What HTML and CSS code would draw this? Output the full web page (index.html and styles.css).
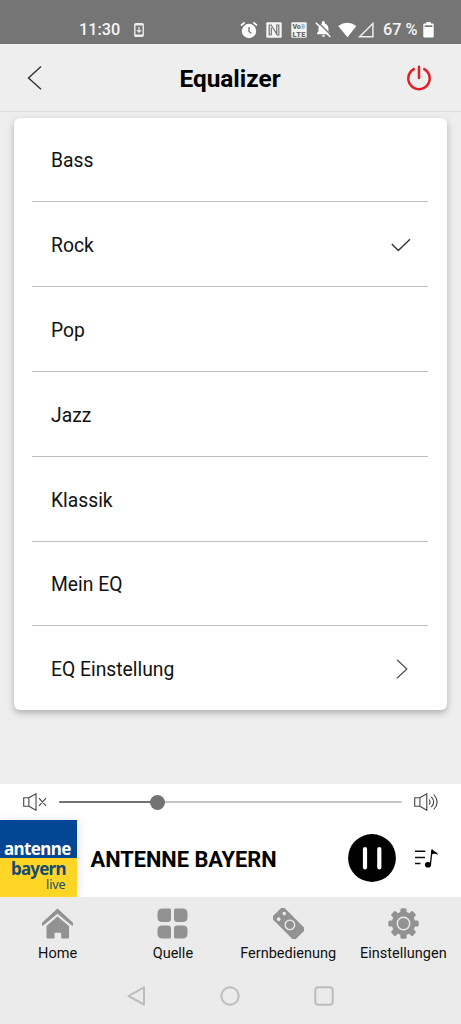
FILE: index.html
```html
<!DOCTYPE html>
<html lang="de">
<head>
<meta charset="utf-8">
<meta name="viewport" content="width=device-width, initial-scale=1">
<title>Equalizer</title>
<link rel="stylesheet" href="styles.css">
</head>
<body>
<div class="app">
  <div class="status">
    <span class="time">11:30</span>
    <svg class="update" width="10" height="14" viewBox="0 0 10 14"><rect x=".8" y=".8" width="8.4" height="12.4" rx="1" fill="none" stroke="#eee" stroke-width="1.4"/><path d="M1 1.7h8M1 12.3h8" stroke="#eee" stroke-width="1.6"/><path d="M5 4v5M3 7.200l2 2 2-2" fill="none" stroke="#eee" stroke-width="1.2"/></svg>
    <div class="indicators">
      <svg width="18" height="18" viewBox="0 0 18 18"><circle cx="9" cy="10" r="7.200" fill="#fff"/><path d="M1 4.500 4.700 1.300M17 4.500 13.300 1.300" stroke="#fff" stroke-width="1.700"/><path d="M9 6v4.500l2.300 1.800" fill="none" stroke="#757575" stroke-width="1.400"/></svg>
      <svg width="16" height="16" viewBox="0 0 16 16"><rect x=".3" y=".3" width="15.400" height="15.400" rx="1" fill="#f4f4f4"/><path d="M5.300 13H3.200V3h2L10.700 12V3h2.100v10h-2" fill="none" stroke="#757575" stroke-width="1.200"/><path d="M5.300 13V5.500" stroke="#757575" stroke-width="1.200"/></svg>
      <svg width="16" height="16" viewBox="0 0 16 16"><rect x=".3" y=".3" width="15.400" height="15.400" rx="1" fill="#f4f4f4"/><g fill="#686868" font-family="Roboto, sans-serif" font-weight="900"><text x="1.400" y="7.300" font-size="7">Vo</text><text x="10.300" y="5.800" font-size="4.500">))</text><text x="1.500" y="14.500" font-size="7.500" textLength="13">LTE</text></g></svg>
      <svg width="17" height="17" viewBox="0 0 17 17"><path d="M2 13.300v-1.200l1.500-1.500V7.500C3.500 4.700 5 3.100 7 2.600V1.400a1.400 1.400 0 0 1 2.800 0v1.200c2.200.5 3.600 2.400 3.600 4.900v3.100l1.600 1.500v1.200zM6.800 14.200h3.300a1.650 1.650 0 0 1-3.300 0z" fill="#fff"/><path d="M2.300.6 16.800 14.700" stroke="#757575" stroke-width="1.400"/><path d="M.8 1.700 15.300 15.900" stroke="#fff" stroke-width="1.400"/></svg>
      <svg width="19" height="16" viewBox="0 0 19 16"><path d="M.2 4.100Q9.500-2.700 18.300 4.100L9.500 15.300z" fill="#fff"/></svg>
      <svg width="16" height="16" viewBox="0 0 16 16"><path d="M1.600 14.800 14.900 1.500v13.300z" fill="none" stroke="#eee" stroke-width="1.500"/></svg>
      <span class="percent">67 %</span>
      <svg width="11" height="16" viewBox="0 0 11 16"><path d="M3.300 0h4.400v1.500h2q1 0 1 1v12q0 1-1 1H1.300q-1 0-1-1v-12q0-1 1-1h2z" fill="#fff"/><path d="M1.700 3.300h7.600V5H1.700z" fill="#757575"/></svg>
    </div>
  </div>

  <header class="header">
    <svg width="16" height="26" viewBox="0 0 16 26"><path d="M14 1.500 1.500 12.900 14 24.300" fill="none" stroke="#333" stroke-width="1.400"/></svg>
    <h1>Equalizer</h1>
    <svg width="26" height="26" viewBox="0 0 26 26"><path d="M7.800 4.100a10.700 10.700 0 1 0 10.400 0M13 1.700v11.200" fill="none" stroke="#e21e25" stroke-width="2.500" stroke-linecap="round"/></svg>
  </header>

  <main class="content">
    <ul class="card">
      <li>Bass</li>
      <li>Rock<svg class="check" width="20" height="14" viewBox="0 0 20 14"><path d="M.8 6 7.300 12.500 19 1.200" fill="none" stroke="#333" stroke-width="1.400"/></svg></li>
      <li>Pop</li>
      <li>Jazz</li>
      <li>Klassik</li>
      <li>Mein EQ</li>
      <li>EQ Einstellung<svg class="more" width="12" height="20" viewBox="0 0 12 20"><path d="M1 .8 10.800 10 1 19.200" fill="none" stroke="#555" stroke-width="1.300"/></svg></li>
    </ul>
  </main>

  <section class="volume">
    <svg width="24" height="18" viewBox="0 0 24 18"><path d="M.7 4.800h5.200v8.500H.7zM5.900 4.800 13 .8v16.500l-7.100-4M16 5.200l7 7.600M23 5.200l-7 7.600" fill="none" stroke="#444" stroke-width="1.100"/></svg>
    <div class="track"><div class="fill"></div><div class="knob"></div></div>
    <svg width="24" height="18" viewBox="0 0 24 18"><path d="M.7 4.800h5.200v8.500H.7zM5.900 4.800 12.800.8v16.500l-6.900-4M15 6.500q2.200 2.500 0 5M17.300 3.800q4.800 5.200 0 10.400M19.700 1.500q6.900 7.500 0 15" fill="none" stroke="#444" stroke-width="1.100"/></svg>
  </section>

  <section class="player">
    <div class="cover"><span class="antenne">antenne</span><span class="bayern">bayern</span><span class="live">live</span></div>
    <strong class="station">ANTENNE BAYERN</strong>
    <svg class="pause" width="48" height="48" viewBox="0 0 48 48"><circle cx="24" cy="24" r="23.900"/><path d="M17 15v18.500M31.300 15v18.500" stroke="#fff" stroke-width="4.200" stroke-linecap="round"/></svg>
    <svg width="25" height="20" viewBox="0 0 25 20"><path d="M1 2.200h10.300M1 8.500h10M1 14.500h5.500M16.300 16l1.700-14.500" stroke="#111" stroke-width="1.400"/><ellipse cx="14" cy="15.800" rx="3.100" ry="2.800"/><path d="M17.300.5h1.500c.8 2.500 4.500 1.800 5.200 5.500-2-1.700-4.800-1.600-7-.7z"/></svg>
  </section>

  <nav class="tabs">
    <div class="tab"><svg width="31" height="31" viewBox="0 0 31 31"><path d="m.5 14.800 15-13.800 15 13.800v2.700L15.500 5.300.5 17.500z" fill="#929292" stroke="#929292" stroke-linejoin="round"/><path d="M4.500 18 15.500 8.500 27 18v11.500q0 1-1 1h-6.800v-4.800q0-1-1-1h-4.700q-1 0-1 1v4.800H5.500q-1 0-1-1z" fill="#929292"/></svg><span>Home</span></div>
    <div class="tab"><svg width="31" height="31" viewBox="0 0 31 31" fill="#929292"><path d="M5.500.5h7q1.500 0 1.500 1.500v9q0 3-3 3H5.500q-5 0-5-4.500v-4q0-5 5-5zM18.500.5h7q5 0 5 5v4q0 4.500-5 4.500H20q-3 0-3-3V2q0-1.500 1.500-1.500zM5.500 17.500h5.500q3 0 3 3v8.500q0 1.500-1.500 1.500h-7q-5 0-5-5v-4q0-4 5-4zM20 17.500h5.500q5 0 5 4v4q0 5-5 5h-7q-1.500 0-1.500-1.500v-8.500q0-3 3-3z"/></svg><span>Quelle</span></div>
    <div class="tab"><svg width="31" height="31" viewBox="0 0 31 31"><g transform="rotate(-45 15.500 15.500)"><rect x="7.300" y="-.7" width="16.400" height="32.400" rx="3.500" fill="#929292"/><circle cx="15.500" cy="17.500" r="4.700" fill="none" stroke="#ebebeb" stroke-width="1.500"/><circle cx="11.700" cy="5.500" r="1.800" fill="#ebebeb"/><circle cx="19.500" cy="5.500" r="1.800" fill="#ebebeb"/></g></svg><span>Fernbedienung</span></div>
    <div class="tab"><svg width="31" height="31" viewBox="0 0 31 31"><g fill="#929292"><circle cx="15.500" cy="15.500" r="11.700"/><g id="teeth"><rect x="12.400" y=".3" width="6.200" height="30.400" rx="1.500"/><rect x=".3" y="12.400" width="30.400" height="6.200" rx="1.500"/></g><use href="#teeth" transform="rotate(45 15.500 15.500)"/></g><circle cx="15.500" cy="15.500" r="6.200" fill="none" stroke="#ebebeb" stroke-width="1.400"/></svg><span>Einstellungen</span></div>
  </nav>

  <div class="system">
    <svg width="19" height="20" viewBox="0 0 19 20"><path d="M17 1.300v17.200L1.500 10z"/></svg>
    <svg width="20" height="20" viewBox="0 0 20 20"><circle cx="10" cy="10" r="8.700"/></svg>
    <svg width="20" height="20" viewBox="0 0 20 20"><rect x="1.300" y="1.300" width="17.400" height="17.400" rx="3"/></svg>
  </div>
</div>
</body>
</html>
```
FILE: styles.css
```css
* { box-sizing: border-box; }
body { margin: 0; font-family: Roboto, "Liberation Sans", sans-serif; color: #111; background: #eee; }
svg { display: block; flex: none; }
.app { width: 461px; height: 1024px; display: flex; flex-direction: column; overflow: hidden; }

.status { height: 44px; background: #757575; color: #f5f5f5; display: flex; align-items: center; padding: 15px 27px 0 79px; font-size: 16.3px; font-weight: 500; }
.time { width: 55px; }
.indicators { display: flex; align-items: center; margin-left: auto; }
.indicators svg:nth-child(1) { margin-right: 8px; }
.indicators svg:nth-child(2) { margin-right: 9px; }
.indicators svg:nth-child(3) { margin-right: 8px; }
.indicators svg:nth-child(4) { margin-right: 6px; }
.indicators svg:nth-child(5) { margin-right: 1px; }
.percent { width: 40px; margin-left: 9px; white-space: nowrap; }

.header { height: 68px; display: flex; align-items: center; justify-content: space-between; padding: 0 29px 0 27px; background: #eee; border-bottom: 1px solid #ddd; box-shadow: 0 1px 3px #0000001c; }
.header h1 { margin: 2px 0 0 11px; font-size: 24.4px; line-height: 28px; font-weight: 700; color: #000; }

.content { height: 672px; padding: 5.600px 14px 0; background: #eee; }
.card { list-style: none; margin: 0; padding: 0 19px 0 17.500px; height: 592.500px; background: #fff; border-radius: 6px; box-shadow: 0 3px 7px #00000045; }
.card li { height: 84.800px; padding: 3px 17px 0 19.500px; display: flex; align-items: center; justify-content: space-between; border-bottom: 1px solid #bebebe; font-size: 19.300px; }
.card li:last-child { height: 83.500px; border: 0; }
.card svg { margin-top: -2px; }
.more { margin-right: 3px; }

.volume { height: 36px; background: #fff; display: flex; align-items: center; padding: 0 23px; }
.track { position: relative; width: 343px; height: 2.500px; margin: 0 12px; background: #c5c5c5; border-radius: 2px; }
.fill { width: 98px; height: 100%; background: #737373; border-radius: 2px; }
.knob { position: absolute; left: 91px; top: -6.200px; width: 15px; height: 15px; border-radius: 50%; background: #737373; }

.player { height: 77px; background: #fff; display: flex; align-items: center; padding-right: 22px; }
.cover { width: 77px; height: 77px; display: flex; flex-direction: column; flex: none; padding-top: 18px; background: linear-gradient(#034694 38.500px, #ffd526 38.500px); box-shadow: 2px 0 9px #00000018; font-family: "Noto Sans", sans-serif; color: #174b72; }
.antenne { color: #fff; font-size: 17px; font-weight: 700; line-height: 21px; padding-left: 4px; letter-spacing: -.6px; }
.bayern { font-size: 17px; font-weight: 700; line-height: 20px; padding-left: 11px; letter-spacing: -.8px; }
.live { font-size: 12.500px; line-height: 11px; padding-left: 46px; letter-spacing: -.1px; }
.station { margin: 2px auto 0 13.500px; font-size: 21.800px; color: #000; white-space: nowrap; }
.pause { margin: -1px 18px 0 0; }

.tabs { height: 71px; background: #ebebeb; display: grid; grid-template-columns: repeat(4, 1fr); }
.tab { display: flex; flex-direction: column; align-items: center; padding-top: 11px; font-size: 14.500px; }
.tab span { margin-top: 6px; line-height: 18px; white-space: nowrap; }

.system { height: 56px; background: #ebebeb; display: flex; align-items: center; justify-content: center; gap: 74px; padding-bottom: 1px; fill: none; stroke: #bdbdbd; stroke-width: 2; stroke-linejoin: round; }
```
